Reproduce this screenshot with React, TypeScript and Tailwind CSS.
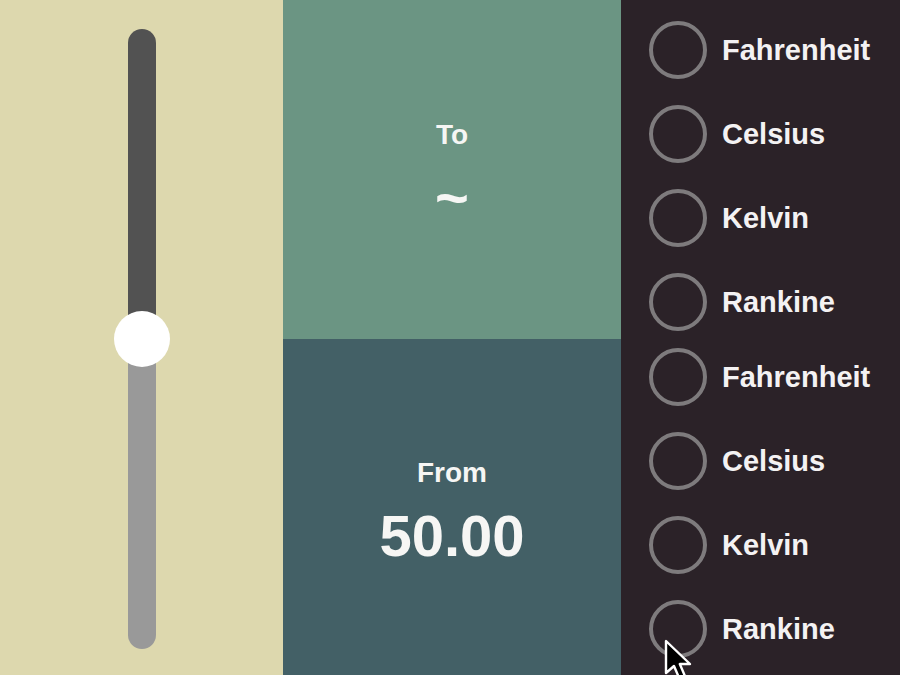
import React from "react"

const units = ["Fahrenheit", "Celsius", "Kelvin", "Rankine"]

function Radio({ label }: { label: string }) {
    return (
        <div className="flex h-[84px] items-center gap-[15px]">
            <div className="h-[58px] w-[58px] shrink-0 rounded-full border-[4px] border-[#7e7b7d]" />
            <span className="text-[29px] font-bold leading-none text-[#f4f2f3]">{label}</span>
        </div>
    )
}

function Readout({ label, value }: { label: string; value: string }) {
    return (
        <div className="flex flex-col items-center gap-[14px] pt-[11px] text-[#f6f6f4]">
            <span className="text-[28px] font-bold leading-[32px]">{label}</span>
            <span className="text-[58px] font-bold leading-[66px]">{value}</span>
        </div>
    )
}

export default function App() {
    return (
        <div
            className="flex h-[675px] w-[900px] overflow-hidden"
            style={{ fontFamily: '"Liberation Sans", Arial, sans-serif' }}
        >
            {/* slider */}
            <div className="flex w-[283px] shrink-0 justify-center bg-[#ddd8ae] pt-[29px]">
                <div className="relative flex h-[620px] w-[28px] flex-col">
                    <div className="h-[310px] rounded-t-full bg-[#525252]" />
                    <div className="flex-1 rounded-b-full bg-[#999999]" />
                    <div className="absolute left-1/2 top-[282px] h-[56px] w-[56px] -translate-x-1/2 rounded-full bg-white" />
                </div>
            </div>

            {/* readouts */}
            <div className="flex w-[338px] shrink-0 flex-col">
                <div className="flex h-[339px] items-center justify-center bg-[#6b9583]">
                    <Readout label="To" value="~" />
                </div>
                <div className="flex flex-1 items-center justify-center bg-[#436066]">
                    <Readout label="From" value="50.00" />
                </div>
            </div>

            {/* units */}
            <div className="relative flex flex-1 flex-col bg-[#2b2228] pl-[28px] pt-[8px]">
                <div className="flex flex-col">
                    {units.map((u) => (
                        <Radio key={"to-" + u} label={u} />
                    ))}
                </div>
                <div className="-mt-[9px] flex flex-col">
                    {units.map((u) => (
                        <Radio key={"from-" + u} label={u} />
                    ))}
                </div>
                <svg
                    className="absolute left-[43px] top-[639px]"
                    width="34"
                    height="44"
                    viewBox="0 0 17 22"
                >
                    <path
                        d="M1 1 L1 17 L5 13.5 L8 20.5 L10.8 19.3 L7.9 12.5 L13 12.5 Z"
                        fill="#000"
                        stroke="#fff"
                        strokeWidth="1.2"
                        strokeLinejoin="round"
                    />
                </svg>
            </div>
        </div>
    )
}
